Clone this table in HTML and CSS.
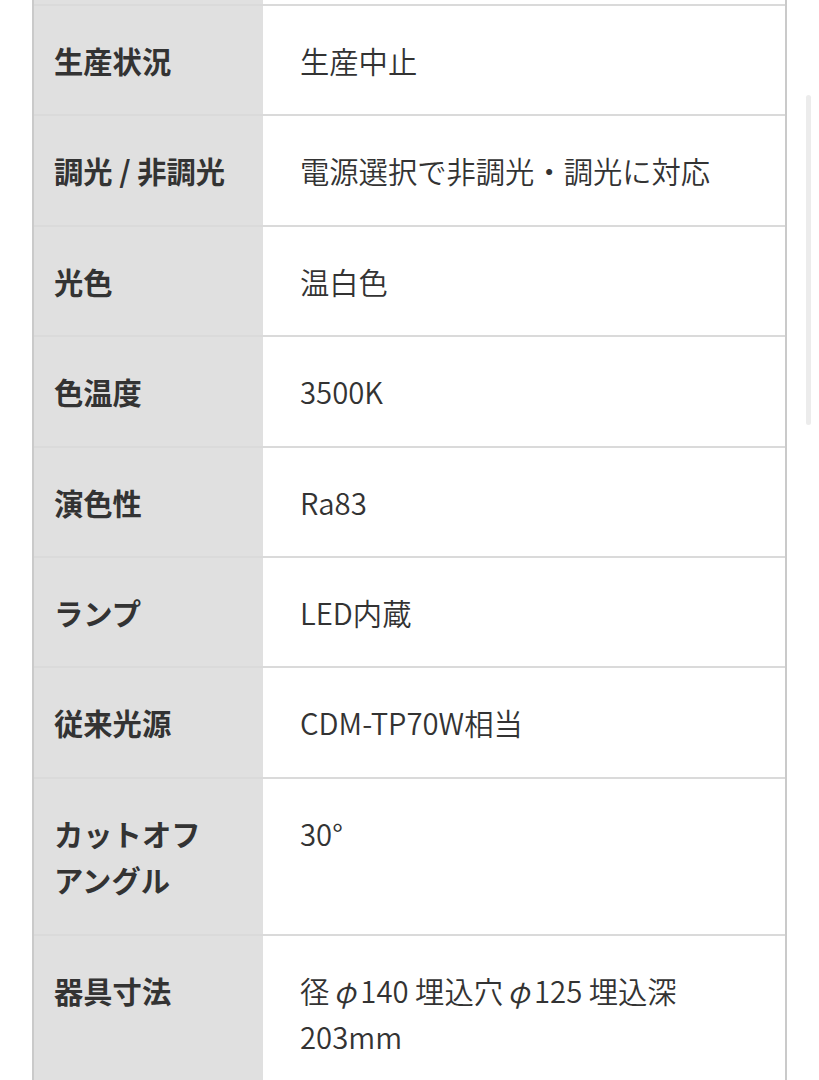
FILE: index.html
```html
<!DOCTYPE html>
<html lang="ja">
<head>
<meta charset="utf-8">
<title>仕様</title>
<link rel="stylesheet" href="styles.css">
</head>
<body>
<div class="spec">
  <div class="row row-cut"><div class="th"></div><div class="td"></div></div>
  <div class="row"><div class="th">生産状況</div><div class="td">生産中止</div></div>
  <div class="row"><div class="th">調光 / 非調光</div><div class="td">電源選択で非調光・調光に対応</div></div>
  <div class="row"><div class="th">光色</div><div class="td">温白色</div></div>
  <div class="row"><div class="th">色温度</div><div class="td">3500K</div></div>
  <div class="row"><div class="th">演色性</div><div class="td">Ra83</div></div>
  <div class="row"><div class="th">ランプ</div><div class="td">LED内蔵</div></div>
  <div class="row"><div class="th">従来光源</div><div class="td">CDM-TP70W相当</div></div>
  <div class="row"><div class="th">カットオフ<br>アングル</div><div class="td">30°</div></div>
  <div class="row"><div class="th">器具寸法</div><div class="td">径<span class="phi">φ</span>140 埋込穴<span class="phi">φ</span>125 埋込深<br>203mm</div></div>
</div>
<div class="scrollbar"></div>
</body>
</html>
```

FILE: styles.css
```css
html, body {
  margin: 0;
  padding: 0;
  background: #ffffff;
}
body {
  font-family: "Noto Sans CJK JP", "Noto Sans", sans-serif;
  color: #333333;
  font-size: 29.3px;
  line-height: 46.4px;
  height: 1080px;
  overflow: hidden;
}
.spec {
  margin-left: 32px;
  width: 751px;
  border-left: 2px solid #cacaca;
  border-right: 2px solid #cacaca;
}
.row {
  display: grid;
  grid-template-columns: 229px 1fr;
  border-top: 2px solid #dadada;
}
.row-cut {
  border-top: none;
  height: 4px;
  overflow: hidden;
}
.th {
  background: #e0e0e0;
  font-weight: 700;
  padding: 31px 10px 31px 20px;
}
.td {
  background: #ffffff;
  font-weight: 350;
  padding: 31px 20px 31px 37px;
}
.row-cut .th, .row-cut .td {
  padding: 0;
}
.phi {
  font-style: italic;
  display: inline-block;
  width: 31px;
  text-align: center;
}
.scrollbar {
  position: absolute;
  left: 806px;
  top: 95px;
  width: 5px;
  height: 330px;
  background: #ececec;
  border-radius: 3px;
}
```
